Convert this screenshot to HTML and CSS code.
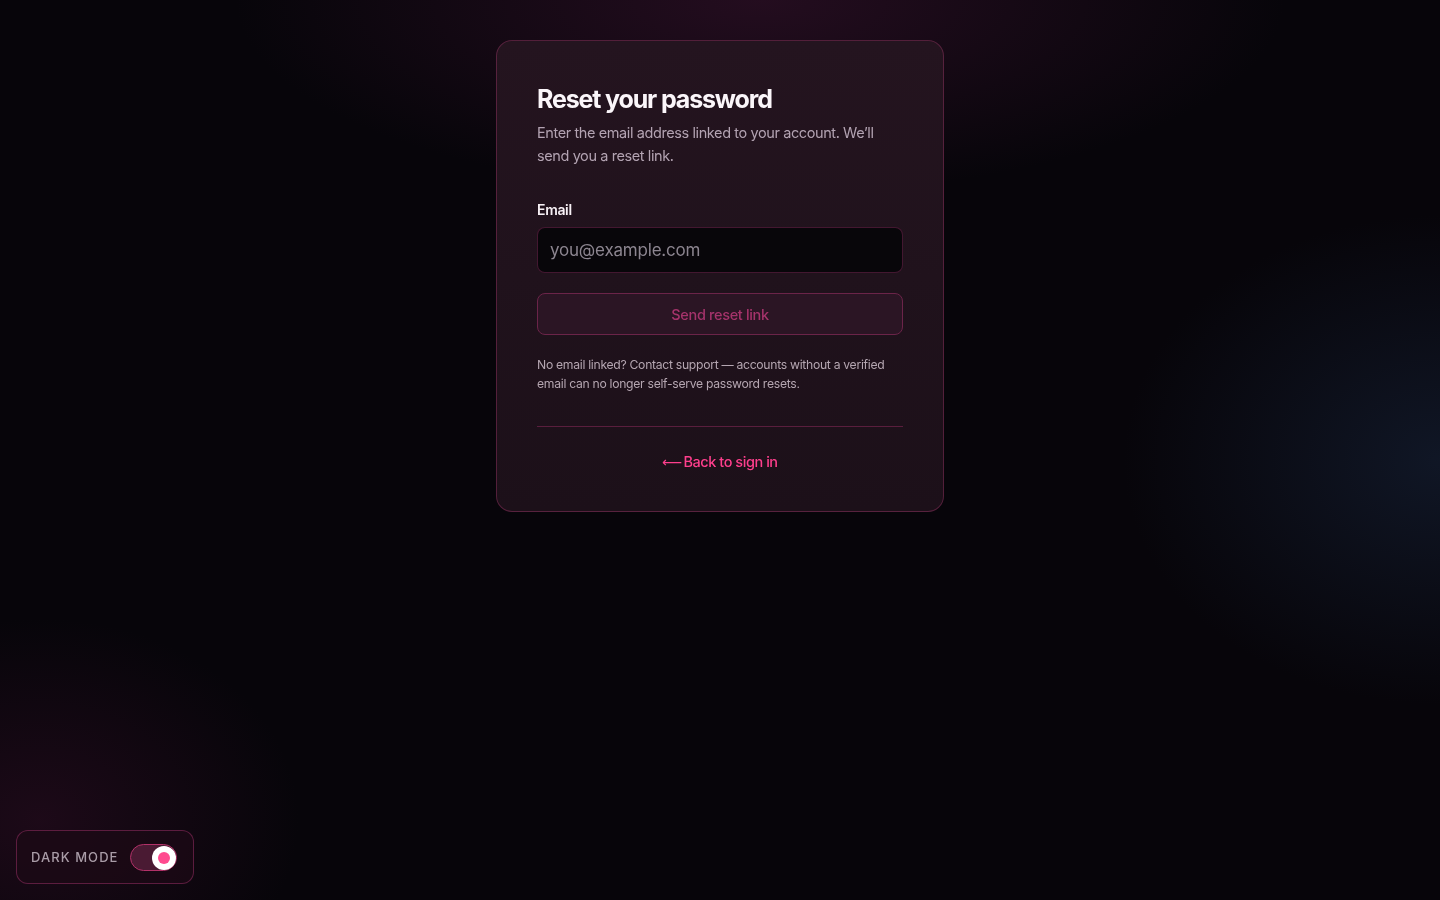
FILE: index.html
```html
<!DOCTYPE html>
<html lang="en">
<head>
<meta charset="utf-8">
<title>Reset your password</title>
<link rel="stylesheet" href="styles.css">
</head>
<body>
<div class="bg"></div>
<main class="page">
  <section class="card">
    <h1 class="title">Reset your password</h1>
    <p class="subtitle">Enter the email address linked to your account. We’ll send you a reset link.</p>
    <form class="form">
      <label class="label" for="email">Email</label>
      <input class="input" id="email" type="email" placeholder="you@example.com">
      <button class="btn" type="button">Send reset link</button>
    </form>
    <p class="note">No email linked? Contact support — accounts without a verified email can no longer self-serve password resets.</p>
    <hr class="divider">
    <div class="back-row"><a class="back" href="#"><span class="arrow">⟵</span>Back to sign in</a></div>
  </section>
</main>
<div class="mode">
  <span class="mode-label">DARK MODE</span>
  <span class="switch"><span class="knob"></span></span>
</div>
</body>
</html>
```

FILE: styles.css
```css
* { box-sizing: border-box; }
html, body { margin: 0; height: 100%; }
body {
  background: #07050a;
  font-family: Inter, "Noto Sans", sans-serif;
  color: #f3eef2;
  overflow: hidden;
}
.bg {
  position: fixed;
  inset: 0;
  background:
    radial-gradient(ellipse 700px 260px at 760px 0px, rgba(55, 18, 45, 0.6), transparent 75%),
    radial-gradient(ellipse 440px 340px at 1440px 460px, rgba(22, 34, 56, 0.6), transparent 72%),
    radial-gradient(ellipse 360px 280px at 40px 820px, rgba(50, 14, 38, 0.5), transparent 72%),
    #07050a;
}
.page {
  position: relative;
  display: flex;
  justify-content: center;
  padding-top: 40px;
}
.card {
  width: 448px;
  padding: 41px 40px 38px;
  border: 1px solid rgba(150, 50, 100, 0.45);
  border-radius: 16px;
  background: linear-gradient(180deg, #24141f 0%, #1c1019 100%);
}
.title {
  margin: 0;
  font-size: 25px;
  line-height: 34px;
  font-weight: 700;
  letter-spacing: -1.15px;
  color: #fbf6fa;
}
.subtitle {
  margin: 5px 0 0;
  font-size: 14.5px;
  line-height: 23px;
  letter-spacing: -0.4px;
  color: #b3a3b2;
}
.form {
  display: flex;
  flex-direction: column;
  margin-top: 33px;
}
.label {
  font-size: 14px;
  line-height: 20px;
  font-weight: 600;
  letter-spacing: -0.35px;
  color: #f7f0f5;
}
.input {
  margin-top: 7px;
  height: 46px;
  padding: 0 12px;
  border: 1px solid rgba(140, 45, 95, 0.45);
  border-radius: 8px;
  background: #08060a;
  color: #eee;
  font-family: Inter, sans-serif;
  font-size: 17px;
  letter-spacing: -0.2px;
  outline: none;
}
.input::placeholder { color: #8c8590; }
.btn {
  margin-top: 20px;
  height: 42px;
  border: 1px solid #6b2449;
  border-radius: 8px;
  background: #2b1524;
  color: #a5336b;
  font-family: Inter, sans-serif;
  font-size: 14.5px;
  font-weight: 500;
  letter-spacing: -0.35px;
}
.note {
  margin: 20px 0 0;
  font-size: 12.2px;
  line-height: 19px;
  letter-spacing: -0.3px;
  color: #b5a6b1;
}
.divider {
  margin: 33px 0 0;
  border: 0;
  border-top: 1px solid rgba(130, 40, 85, 0.6);
}
.back-row {
  display: flex;
  justify-content: center;
  margin-top: 24px;
}
.back {
  display: flex;
  align-items: center;
  color: #ff3f8d;
  text-decoration: none;
  font-size: 14.5px;
  line-height: 22px;
  font-weight: 500;
  letter-spacing: -0.45px;
}
.arrow {
  font-family: "DejaVu Sans", sans-serif;
  font-size: 14px;
  font-weight: 400;
  letter-spacing: 0;
  margin-right: 1px;
}
.mode {
  position: fixed;
  left: 16px;
  bottom: 16px;
  width: 178px;
  height: 54px;
  display: flex;
  align-items: center;
  gap: 12px;
  padding: 0 14px;
  border: 1px solid rgba(160, 50, 105, 0.5);
  border-radius: 12px;
  background: rgba(28, 10, 22, 0.75);
}
.mode-label {
  font-family: Inter, sans-serif;
  font-size: 13px;
  font-weight: 500;
  letter-spacing: 1.05px;
  white-space: nowrap;
  color: #a99ca7;
}
.switch {
  position: relative;
  flex: none;
  width: 47px;
  height: 27px;
  border-radius: 14px;
  border: 1px solid #b23168;
  background: #4a1a33;
}
.knob {
  position: absolute;
  right: 0;
  top: 1px;
  width: 24px;
  height: 24px;
  border-radius: 50%;
  background: #fff;
  display: flex;
  align-items: center;
  justify-content: center;
}
.knob::after {
  content: "";
  width: 12px;
  height: 12px;
  border-radius: 50%;
  background: #ff4a8f;
}
```
